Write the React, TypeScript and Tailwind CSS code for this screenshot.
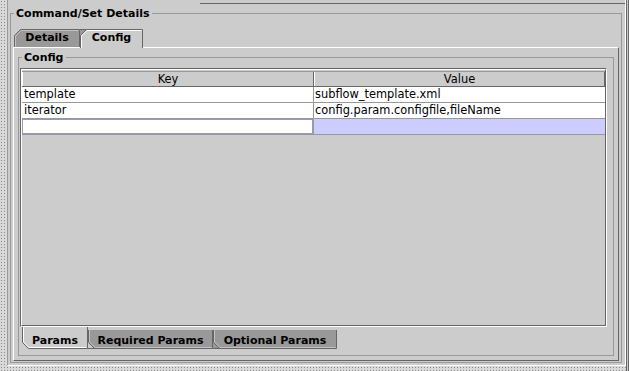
import React from "react";

const dots =
  "bg-[#d9d9d9] bg-[radial-gradient(circle,#8c8c8c_0.7px,transparent_1px)] bg-[length:3px_3px]";

type TabProps = {
  label: string;
  w: number;
  h: number;
  size: string;
  selected?: boolean;
  under?: string;
  flip?: boolean;
  textClass?: string;
};

// Metal style tab: cut corner, dark outline, light inner edge
function Tab({ label, w, h, size, selected, under, flip, textClass }: TabProps) {
  const bg = selected ? "#cccccc" : "#999999";
  const hi = selected ? "#ffffff" : "#c2c2c2";
  return (
    <div className={`relative flex shrink-0 justify-center ${size} ${textClass ?? "items-center"}`}>
      <svg
        width={w}
        height={h}
        className={`absolute inset-0 ${flip ? "-scale-y-100" : ""}`}
      >
        {under && (
          <>
            <path d="M0 0 H7 L0 7 Z" fill={under} />
            <path d="M0 0.5 H7" stroke="#666666" />
          </>
        )}
        <path
          d={`M0.5 ${h} V6.5 L6.5 0.5 H${w - 0.5} V${h}`}
          fill={bg}
          stroke="#666666"
        />
        <path d={`M1.5 ${h} V7 L7 1.5 H${w - 1.5}`} fill="none" stroke={hi} />
      </svg>
      <span className="relative text-[11px] leading-[14px] font-bold">{label}</span>
    </div>
  );
}

const rows = [
  { key: "template", value: "subflow_template.xml" },
  { key: "iterator", value: "config.param.configfile,fileName" },
];

export default function App() {
  return (
    <div className="flex h-[371px] w-[629px] overflow-hidden bg-[#cccccc] font-['DejaVu_Sans',sans-serif] text-black">
      <div className="flex w-[626px] flex-col">
        <div className="flex h-[366px]">
          <div className={`w-[7px] ${dots}`} />
          <main className="relative flex w-[619px] flex-col border-b border-l border-r border-b-white border-l-[#9a9a9a] border-r-white pt-[13px] pl-[2px] pr-[3px]">
            <div className="absolute left-[192px] right-0 top-[3px] h-px bg-[#666666]" />

            {/* Command/Set Details group */}
            <section className="relative flex h-[350px] flex-col border border-[#999999] px-[2px] pt-[15px] pb-[1px]">
              <span className="absolute left-[3px] top-[-7px] bg-[#cccccc] px-[2px] text-[11px] leading-[14px] font-bold">
                Command/Set Details
              </span>

              <div className="ml-[1px] flex h-[18px] items-start">
                <Tab label="Details" w={66} h={18} size="w-[66px] h-[18px]" />
                <div className="relative z-10">
                  <Tab
                    label="Config"
                    w={63}
                    h={19}
                    size="w-[63px] h-[19px]"
                    selected
                    under="#999999"
                    textClass="items-start pt-[2px]"
                  />
                </div>
              </div>

              <div className="flex flex-1 flex-col border border-b-[#666666] border-l-white border-r-[#666666] border-t-white px-[4px] pt-[9px] pb-[4px]">
                {/* Config group */}
                <div className="relative flex flex-1 flex-col border border-[#999999] pt-[10px] pb-[6px] pl-[1px] pr-[6px]">
                  <span className="absolute left-[3px] top-[-7px] bg-[#cccccc] px-[2px] text-[11px] leading-[14px] font-bold">
                    Config
                  </span>

                  <div className="flex flex-1 flex-col border border-b-white border-l-[#666666] border-r-white border-t-[#666666]">
                    <div className="flex flex-1 flex-col border border-b-[#666666] border-l-white border-r-[#666666] border-t-white pt-[1px] text-[11.4px]">
                      <div className="flex h-[16px] border-b border-t border-b-[#666666] border-t-[#999999] leading-[14px]">
                        <div className="flex w-[292px] justify-center border-l border-r border-l-white border-r-[#666666]">
                          Key
                        </div>
                        <div className="flex flex-1 justify-center border-l border-r border-l-white border-r-[#666666]">
                          Value
                        </div>
                      </div>
                      {rows.map((r) => (
                        <div
                          key={r.key}
                          className="flex h-[16px] border-b border-[#999999] bg-white leading-[15px]"
                        >
                          <div className="w-[292px] border-r border-[#999999] pl-[2px]">{r.key}</div>
                          <div className="flex-1 pl-[1px]">{r.value}</div>
                        </div>
                      ))}
                      <div className="flex h-[16px] border-b border-[#999999]">
                        <div className="w-[292px] border-r border-[#999999] bg-white">
                          <div className="h-full border border-[#9999bb]" />
                        </div>
                        <div className="flex-1 bg-[#ccccff]" />
                      </div>
                    </div>
                  </div>

                  <div className="ml-[2px] flex h-[22px] items-start">
                    <Tab
                      label="Params"
                      w={66}
                      h={22}
                      size="w-[66px] h-[22px]"
                      selected
                      flip
                      textClass="items-start pt-[7px]"
                    />
                    <div className="mt-[3px]">
                      <Tab
                        label="Required Params"
                        w={125}
                        h={19}
                        size="w-[125px] h-[19px]"
                        under="#cccccc"
                        flip
                        textClass="items-start pt-[4px]"
                      />
                    </div>
                    <div className="mt-[3px]">
                      <Tab
                        label="Optional Params"
                        w={124}
                        h={19}
                        size="w-[124px] h-[19px]"
                        under="#999999"
                        flip
                        textClass="items-start pt-[4px]"
                      />
                    </div>
                  </div>
                </div>
              </div>
            </section>
          </main>
        </div>
        <div className={`h-[5px] ${dots}`} />
      </div>
      <div className="w-[3px] border-x border-[#666666]" />
    </div>
  );
}
